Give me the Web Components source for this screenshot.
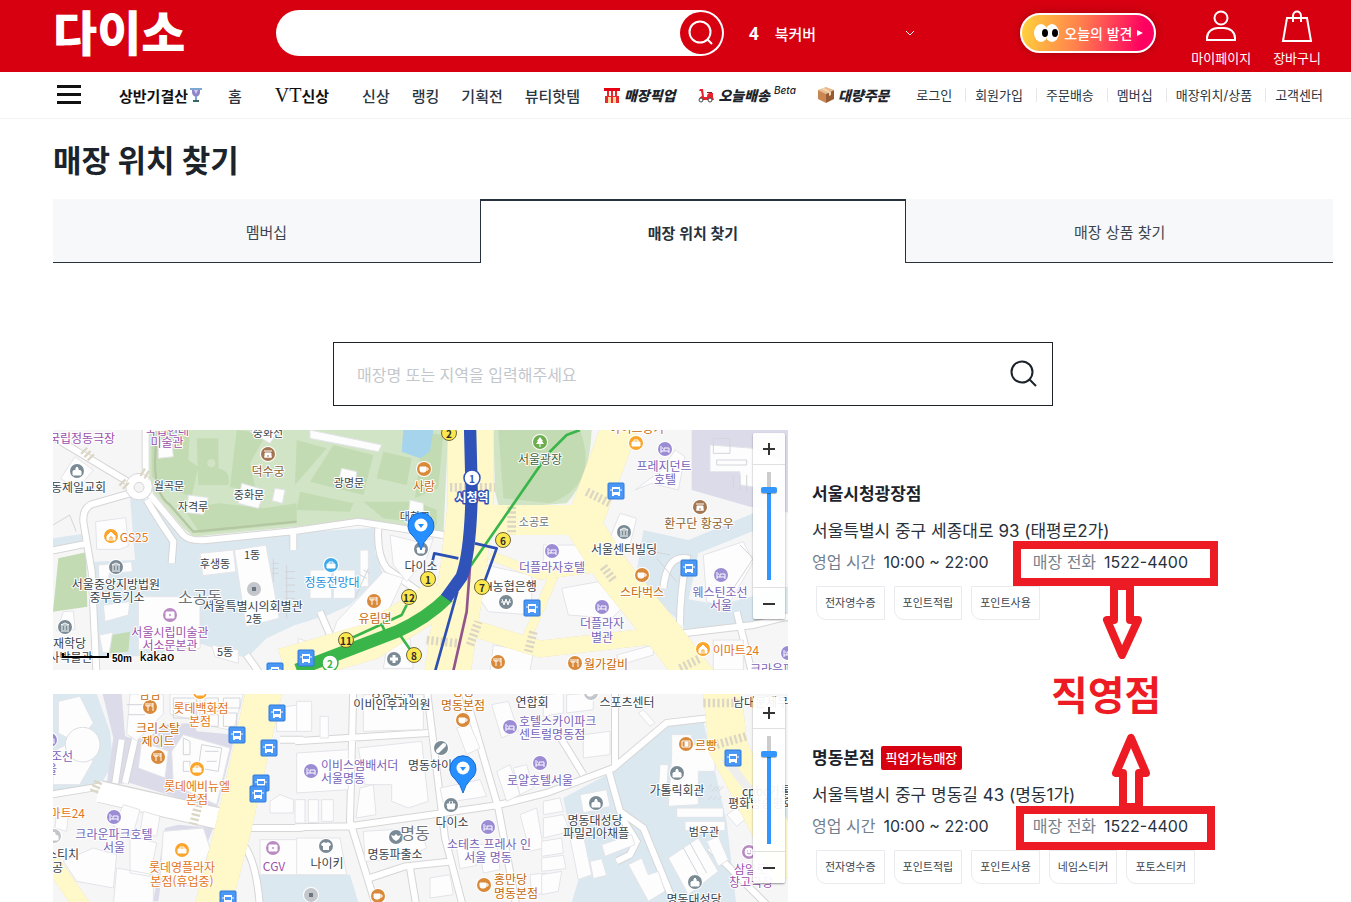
<!DOCTYPE html>
<html lang="ko">
<head>
<meta charset="utf-8">
<meta name="viewport" content="width=device-width, initial-scale=1">
<title>매장 위치 찾기</title>
<style>
    html{
        scrollbar-width: none;
    }
    body{
        margin: 0;
        background: #fff;
        color: #1c232b;
        font-family: Inter, "Noto Sans CJK KR", sans-serif;
        font-size: 15px;
    }
    main{
        padding: 0 18px 40px 53px;
    }
    h1{
        margin: 22px 0 18px;
        font-size: 31px;
        line-height: 40px;
        font-weight: 700;
    }
    store-search{
        margin: 79px auto 24px;
    }
</style>
</head>
<body>
<site-header></site-header>
<site-nav></site-nav>
<main>
    <h1>매장 위치 찾기</h1>
    <page-tabs>
        <a href="#membership">멤버십</a>
        <a href="#store" aria-current="page">매장 위치 찾기</a>
        <a href="#goods">매장 상품 찾기</a>
    </page-tabs>
    <store-search></store-search>
    <store-list>
        <store-card area="cityhall" hours="10:00 ~ 22:00" phone="1522-4400" tags="전자영수증,포인트적립,포인트사용">
            <span slot="name">서울시청광장점</span>
            <span slot="address">서울특별시 중구 세종대로 93 (태평로2가)</span>
        </store-card>
        <store-card class="second" area="myeongdong" hours="10:00 ~ 22:00" phone="1522-4400" badge="픽업가능매장" tags="전자영수증,포인트적립,포인트사용,네임스티커,포토스티커">
            <span slot="name">명동본점</span>
            <span slot="address">서울특별시 중구 명동길 43 (명동1가)</span>
        </store-card>
        <arrow-note slot="note">직영점</arrow-note>
    </store-list>
</main>

<script>
class BaseElement extends HTMLElement {
    constructor() {
        super();
        this.shadow = this.attachShadow({ mode: 'open' });
    }
    connectedCallback() {
        this.shadow.innerHTML = this.render();
    }
}

class SiteHeader extends BaseElement {
    render() {
        return `
<style>
    :host{
        display: flex;
        align-items: center;
        height: 72px;
        padding: 0 30px 0 53px;
        background: #d70011;
        color: #fff;
        box-sizing: border-box;
    }
    a{
        color: inherit;
        text-decoration: none;
    }
    button{
        border: none;
        padding: 0;
        background: none;
        color: inherit;
        font: inherit;
    }
    svg{
        display: block;
        fill: none;
        stroke: currentColor;
    }
    .logo{
        flex: none;
        width: 223px;
        margin-bottom: 4px;
        font-size: 48px;
        line-height: 60px;
        font-weight: 900;
    }
    form{
        display: flex;
        flex: 0 1 448px;
        height: 46px;
        margin-bottom: 6px;
        padding: 2px;
        border-radius: 23px;
        background: #fff;
        box-sizing: border-box;
    }
    input{
        flex: 1;
        min-width: 0;
        border: none;
        outline: none;
        padding: 0 24px;
        background: none;
        font: inherit;
    }
    .find{
        display: grid;
        place-items: center;
        width: 42px;
        height: 42px;
        border-radius: 50%;
        background: #d70011;
    }
    .rank{
        display: flex;
        align-items: center;
        gap: 16px;
        width: 166px;
        margin: 0 0 6px 25px;
        font-weight: 500;
    }
    .rank b{
        font-family: "Open Sans", sans-serif;
        font-size: 17px;
        font-weight: 700;
    }
    .rank button{
        margin-left: auto;
    }
    .right{
        display: flex;
        align-items: center;
        margin-left: auto;
        font-size: 13px;
    }
    .today{
        display: flex;
        align-items: center;
        gap: 5px;
        height: 40px;
        width: 136px;
        margin: 0 35px 6px 0;
        padding-left: 12px;
        border: 2px solid #fff;
        border-radius: 20px;
        box-sizing: border-box;
        background: linear-gradient(100deg, #ffd43b, #ff7c4e 45%, #ff0060 90%);
        box-shadow: 0 0 10px rgba(90,0,0,.4);
        font-size: 14px;
        font-weight: 500;
        white-space: nowrap;
    }
    .today svg{
        stroke: none;
        flex: none;
    }
    .menu{
        display: grid;
        justify-items: center;
        gap: 6px;
        padding-top: 5px;
        line-height: 20px;
    }
    .menu + .menu{
        margin-left: 22px;
    }
</style>
<a class='logo' href='#home'>다이소</a>
<form>
    <input type='search' aria-label='상품 검색'>
    <button class='find' type='button' aria-label='검색'>
        <svg width='26' height='26' viewBox='0 0 26 26' stroke-width='2'><circle cx='12' cy='12' r='10.5'/><path d='M19 19l5 5'/></svg>
    </button>
</form>
<div class='rank'>
    <b>4</b><a href='#rank'>북커버</a>
    <button aria-label='인기 검색어 열기'><svg width='10' height='6' viewBox='0 0 10 6'><path d='M1 1l4 4 4-4'/></svg></button>
</div>
<div class='right'>
    <a class='today' href='#today'>
        <svg width='25' height='20' viewBox='0 0 25 20'>
            <ellipse cx='7' cy='10' rx='7' ry='9' fill='#fff'/><ellipse cx='18' cy='10' rx='7' ry='9' fill='#fff'/>
            <ellipse cx='11' cy='10' rx='3' ry='4' fill='#000'/><ellipse cx='21' cy='10' rx='3' ry='4' fill='#000'/>
        </svg>
        오늘의 발견
        <svg width='6' height='8' viewBox='0 0 6 8'><path d='M0 1l6 3-6 3z' fill='#fff'/></svg>
    </a>
    <a class='menu' href='#my'>
        <svg width='32' height='32' viewBox='0 0 32 32' stroke-width='2'><circle cx='16' cy='8' r='6.5'/><path d='M2 30v-2c0-6 5-10 11-10h6c6 0 11 4 11 10v2z'/></svg>
        마이페이지
    </a>
    <a class='menu' href='#cart'>
        <svg width='32' height='32' viewBox='0 0 32 32' stroke-width='2'><path d='M6 8h20l4 23H2z'/><path d='M12 12V6c0-6 8-6 8 0v6'/></svg>
        장바구니
    </a>
</div>`;
    }
}

class SiteNav extends BaseElement {
    render() {
        const links = ['로그인', '회원가입', '주문배송', '멤버십', '매장위치/상품', '고객센터'];
        return `
<style>
    :host{
        display: flex;
        align-items: center;
        height: 47px;
        padding: 0 28px 0 57px;
        border-bottom: 1px solid #f2f3f5;
        box-sizing: border-box;
        white-space: nowrap;
    }
    button{
        display: grid;
        gap: 5px;
        width: 24px;
        margin: 0 38px 2px 0;
        padding: 0;
        border: none;
        background: none;
    }
    button i{
        height: 3px;
        background: #111;
    }
    a{
        color: #2b3540;
        text-decoration: none;
    }
    nav{
        display: flex;
        align-items: center;
        gap: 22px;
        font-weight: 500;
    }
    nav a{
        display: flex;
        align-items: center;
        gap: 4px;
    }
    .pick{
        color: #1c232b;
        font-size: 14px;
        font-weight: 900;
    }
    .pickup{
        margin-left: 2px;
    }
    .tilt{
        font-style: italic;
    }
    .event{
        gap: 2px;
        margin-right: 4px;
        font-weight: 700;
        color: #111;
    }
    .brand{
        gap: 0;
        margin: 0 11px;
        color: #111;
    }
    .brand span{
        font: 20px/20px "Liberation Serif", serif;
    }
    .brand b{
        font-weight: 700;
    }
    sup{
        align-self: flex-start;
        font: italic 500 10px/10px Inter, sans-serif;
    }
    ul{
        display: flex;
        margin: 0 0 0 auto;
        padding: 0;
        list-style: none;
        font-size: 13px;
    }
    li{
        line-height: 14px;
    }
    li + li{
        margin-left: 13px;
        padding-left: 9px;
        border-left: 1px solid #e5e7ea;
    }
</style>
<button aria-label='전체 메뉴'><i></i><i></i><i></i></button>
<nav>
    <a class='event' href='#event'>상반기결산
        <svg width='12' height='16' viewBox='0 0 12 16'><path d='M2 1h8v4q0 4-4 5-4-1-4-5z' fill='#8f86c9'/><path d='M0 2h12M6 9v4' stroke='#7ba7d4' stroke-width='2'/><path d='M4 3l2 4 2-4z' fill='#d7c8f0'/><path d='M3 13h6v2H3z' fill='#376a5d'/></svg>
    </a>
    <a href='#home'>홈</a>
    <a class='brand' href='#vt'><span>VT</span><b>신상</b></a>
    <a href='#new'>신상</a>
    <a href='#ranking'>랭킹</a>
    <a href='#plan'>기획전</a>
    <a href='#beauty'>뷰티핫템</a>
    <a class='pick pickup tilt' href='#pickup'>
        <svg width='16' height='15' viewBox='0 0 16 15'><path d='M0 0h16v3H0z' fill='#e60012'/><path d='M1 3h14v12H1z' fill='#e8282a'/><path d='M1 3h2v5H1zM5 3h2v5H5zM9 3h2v5H9zM13 3h2v5h-2z' fill='#fff'/><path d='M4 9h3v6H4zM9 9h3v6H9z' fill='#ffd9a0'/></svg>
        매장픽업
    </a>
    <a class='pick tilt' href='#delivery'>
        <svg width='17' height='15' viewBox='0 0 17 15'><path d='M3 1h3l1 8h3q0-4 3-4h3v4l1 3H2q0-3 3-4L4 3H2z' fill='#e8222c'/><path d='M10 4h5v1h-5z' fill='#8a1a20'/><circle cx='4' cy='12' r='2' fill='#fff' stroke='#444'/><circle cx='13' cy='12' r='2' fill='#fff' stroke='#444'/></svg>
        오늘배송<sup>Beta</sup>
    </a>
    <a class='pick tilt' href='#bulk'>
        <svg width='16' height='16' viewBox='0 0 16 16'><path d='M8 0l8 3-8 4-8-4z' fill='#e8b98b'/><path d='M0 3l8 4v9l-8-4z' fill='#c98552'/><path d='M16 3l-8 4v9l8-4z' fill='#995b31'/><path d='M3 2l8 4v3l2-1V5L6 1z' fill='#f3d7b4'/></svg>
        대량주문
    </a>
</nav>
<ul>${links.map(t => `<li><a href='#link'>${t}</a></li>`).join('')}</ul>`;
    }
}

class PageTabs extends BaseElement {
    render() {
        return `
<style>
    :host{
        display: grid;
        grid-template-columns: repeat(3, 1fr);
        height: 64px;
    }
    ::slotted(a){
        display: grid;
        place-items: center;
        padding-top: 2px;
        border-bottom: 1px solid #28323c;
        background: #f7f8fa;
        color: #3c4650;
        font-size: 15px;
        text-decoration: none;
    }
    ::slotted(a[aria-current]){
        padding: 0;
        border: 1px solid #28323c;
        border-width: 2px 1px 0;
        background: #fff;
        color: #28323c;
        font-weight: 600;
    }
</style>
<slot></slot>`;
    }
}

class StoreSearch extends BaseElement {
    render() {
        return `
<style>
    :host{
        display: block;
        max-width: 720px;
    }
    form{
        display: flex;
        height: 64px;
        padding: 0 14px 0 23px;
        border: 1px solid #1c232b;
        box-sizing: border-box;
    }
    input{
        flex: 1;
        min-width: 0;
        padding: 2px 0 0;
        border: none;
        outline: none;
        font: inherit;
        font-size: 16px;
    }
    input::placeholder{
        color: #c3c7cc;
    }
    button{
        padding: 0;
        border: none;
        background: none;
        color: #1c232b;
    }
    svg{
        display: block;
        fill: none;
        stroke: currentColor;
        stroke-width: 2;
    }
</style>
<form>
    <input type='text' aria-label='매장 검색' placeholder='매장명 또는 지역을 입력해주세요'>
    <button type='button' aria-label='검색'><svg width='28' height='28' viewBox='0 0 28 28'><circle cx='12' cy='12' r='10.5'/><path d='M19 19l7 7'/></svg></button>
</form>`;
    }
}

class StoreList extends BaseElement {
    render() {
        return `
<style>
    :host{
        display: grid;
        gap: 24px;
        position: relative;
    }
</style>
<slot></slot>
<slot name='note'></slot>`;
    }
}

class StoreCard extends BaseElement {
    render() {
        const attr = name => this.getAttribute(name);
        return `
<style>
    :host{
        display: grid;
        grid-template-columns: minmax(0, 735px) minmax(420px, 1fr);
        gap: 24px;
        --mark: -9px -30px -12px -20px;
    }
    :host(.second){
        --mark: -8px -27px -12px -17px;
    }
    .info{
        display: flex;
        flex-direction: column;
        justify-content: center;
        padding-top: 2px;
    }
    h2{
        display: flex;
        align-items: center;
        gap: 6px;
        margin: 0;
        font-size: 17px;
        line-height: 24px;
        font-weight: 700;
    }
    mark{
        padding: 0 5px;
        border-radius: 2px;
        background: #d70011;
        color: #fff;
        font-size: 13px;
        font-weight: 500;
    }
    p{
        margin: 12px 0 6px;
        font-size: 17px;
        line-height: 26px;
        color: #28323c;
    }
    dl{
        display: flex;
        gap: 44px;
        margin: 0;
        font-size: 16px;
        line-height: 24px;
    }
    dl div{
        display: flex;
        gap: 8px;
        position: relative;
    }
    dt{
        color: #74808c;
    }
    dd{
        margin: 0;
        color: #28323c;
    }
    .phone::after{
        content: '';
        position: absolute;
        inset: var(--mark);
        border: 8px solid #ed1c24;
    }
    ul{
        display: flex;
        gap: 9px;
        margin: 12px 0 0 4px;
        padding: 0;
        list-style: none;
    }
    li{
        padding: 0 8px;
        border: 1px solid #e9ebee;
        border-radius: 0 0 0 10px;
        font-size: 11px;
        line-height: 32px;
        color: #3c4650;
    }
</style>
<store-map area='${attr('area')}'></store-map>
<div class='info'>
    <h2><slot name='name'></slot>${attr('badge') ? `<mark>${attr('badge')}</mark>` : ''}</h2>
    <p><slot name='address'></slot></p>
    <dl>
        <div><dt>영업 시간</dt><dd>${attr('hours')}</dd></div>
        <div class='phone'><dt>매장 전화</dt><dd>${attr('phone')}</dd></div>
    </dl>
    <ul>${attr('tags').split(',').map(t => `<li>${t}</li>`).join('')}</ul>
</div>`;
    }
}

// Two arrows that join the word to the phone boxes above and below it
class ArrowNote extends BaseElement {
    render() {
        return `
<style>
    :host{
        display: flex;
        flex-direction: column;
        position: absolute;
        left: 998px;
        top: 154px;
        width: 112px;
        color: #ed1c24;
        font-size: 40px;
        line-height: 74px;
        font-weight: 700;
    }
    svg{
        display: block;
        fill: #fff;
        stroke: currentColor;
        stroke-width: 8;
        stroke-linejoin: round;
    }
</style>
<svg width='112' height='75' viewBox='0 0 112 75'><path d='M63 2h16v34h8L71 71 56 36h7z'/></svg>
<slot></slot>
<svg width='112' height='75' viewBox='0 0 112 75'><path d='M72 74h16V40h7L80 5 65 40h7z'/></svg>`;
    }
}

const COLORS = {
    k: '#39434c', g: '#707478', p: '#9c51ab', v: '#7663b8', o: '#e2761b', c: '#c46a0a', b: '#8d6232', l: '#1e8fdc', t: '#3f6540'
};
const DOTS = {
    k: '#7b8b95', p: '#b98bc2', v: '#9c8cd4', o: '#faa52c', c: '#d8893a', b: '#a37650', l: '#3fa9ea', t: '#6cae4f', x: '#c3c6ca'
};
const GLYPHS = {
    bed: '<path d="M-4 -3v7M-4 2h8v2M4 2v-3h-5v3M-3 -1h1"/>',
    cup: '<path d="M-4 -2h6v3q0 2-2 2h-2q-2 0-2-2z" fill="#fff"/><path d="M2 -1h2v2h-2"/>',
    fork: '<path d="M-2 -4v8M-4 -4v3h4v-3M3 -4v8M2 -4v4"/>',
    bag: '<path d="M-4 -1h8v4h-8z" fill="#fff"/><path d="M-2 -1v-2h4v2"/>',
    shop: '<path d="M-4 0l4-4 4 4v4h-8z" fill="#fff"/><path d="M-1 4v-3h2v3" stroke="#faa52c"/>',
    church: '<path d="M-4 4v-4l3-1v-2l1-1 1 1v2l3 1v4z" fill="#fff"/>',
    museum: '<path d="M-4 -2l4-2 4 2zM-4 4h8M-3 -1v4M0 -1v4M3 -1v4"/>',
    basket: '<path d="M-4 -1h8l-1 5h-6z" fill="#fff"/><path d="M-2 -1l1-3M2 -1l-1-3"/>',
    cross: '<path d="M0 -4v8M-4 0h8" stroke-width="3"/>',
    won: '<path d="M-4 -3l2 6 2-6 2 6 2-6M-5 0h10"/>',
    tree: '<path d="M0 -5l3 4h-1l2 3h-8l2-3h-1z" fill="#fff" stroke="none"/><path d="M0 1v4"/>',
    palace: '<path d="M-3 -1h6v4h-6z" fill="#fff"/><path d="M-4 -3h8M-4 3h8"/><path d="M0 1v2" stroke="#a37650"/>',
    ticket: '<path d="M-4 -3h8v6h-8z" fill="#fff"/><circle r="1.5" fill="#b98bc2"/>',
    bread: '<path d="M-4 -3h8v6h-8z"/><path d="M-1 -2h3v4h-3z" fill="#fff"/>',
    tee: '<path d="M-2 -4l-3 2 1 2 1 0v4h6v-4h1l1-2-3-2-2 1z" fill="#fff" stroke="none"/>',
    police: '<path d="M-5 -2l3 1 2-2 2 2 3-1-2 4-3 2-3-2z" fill="#fff" stroke="none"/>',
    pill: '<path d="M-3 3l6-6" stroke-width="4" stroke-linecap="round"/>',
    square: '<path d="M-2 -2h4v4h-4z" fill="#6d777f" stroke="none"/>',
    face: '<circle r="4" fill="#fff"/><path d="M-2 1q2 2 4 0M-2 -1h1M1 -1h1" stroke="#b98bc2"/>'
};

// Ground shapes are drawn on a grid three times as fine as the screen
const MAPS = {
    cityhall: {
        top: 15,
        ground: `
            <g class='blue'>
                <path d='M240 215L300 225 420 355 735 322 985 308 975 380 1000 450 900 540 835 570 735 600 650 640 590 700 400 640 330 690 130 700 125 410 255 405z'/>
                <path d='M9 340L108 325 108 362 9 378zM1780 315L1915 345 2110 265 2130 310 1945 385 1900 600 1790 500 1760 440zM1900 520L2010 540 2230 480 2230 590 1900 612z'/>
            </g>
            <path class='lav' d='M1925 15h305v250l-130-20-175-50z'/>
            <path class='lawn' d='M300 15H1195L1180 330 925 285 735 305 430 335 400 310 300 190z'/>
            <g class='grass'>
                <path d='M305 15h115l-5 90 30 20-20 90q-60-20-120-60zM440 40h65v90q40 10 30 50h-90zM560 15l90 10-50 90 20 90-80-20zM640 250L740 235V295L450 325 400 250 510 235z'/>
                <path d='M740 45L830 70 735 180zM850 60L970 90 940 210 780 170zM1000 80L1085 100 1070 180 980 160zM750 200L910 235 900 260 740 255zM940 230L1100 230 1160 255 1160 300 1000 280zM1120 20l60 10-15 160-70 30z'/>
                <path d='M25 400L108 382 112 545 9 560zM185 630L240 620 235 680 178 684z'/>
            </g>
            <path d='M320 40Q300 200 360 240L430 320 740 290' fill='none' stroke='#b4c7a3' stroke-width='7'/>
            <path d='M1060 15h90l-10 65-30 20-55-20z' fill='#a5d4ec'/>
            <circle cx='484' cy='115' r='22' class='grass'/><circle cx='484' cy='115' r='12' class='lawn'/>
            <g class='edge'><path id='r1' d='M0 30L250 180M287 0V160M300 210L400 330Q420 350 470 345L735 318 925 290 1180 330M240 205L125 238Q98 250 100 290L125 440 140 760M0 378L115 355M290 225L330 290 370 350 365 415M985 310Q980 390 1010 430L1140 525M810 560L870 700M1900 625L2110 600 2230 570M1840 490Q1850 390 1910 400 1890 500 1890 600M2060 560L2110 760M590 690L640 760M730 320V375'/></g>
            <g class='road'><use href='#r1'/></g>
            <circle cx='267' cy='185' r='40' fill='#fff' stroke='#d6d6d6' stroke-width='3'/><circle cx='267' cy='187' r='15' fill='#f4f4f5' stroke='#d6d6d6' stroke-width='3'/>
            <g class='house'>
                <path d='M75 95l55 40-50 60-48-35zM137 290l90-12 8 85-25 10-70 0zM325 55l40-10 5 50-45 5zM600 20l60-20 30 10-30 45zM415 210l60 8-15 50-50-5zM575 175l70 20-20 55-60-15zM675 190l30 5-8 40-30-8z'/>
                <path d='M450 385l100-10 8 65-100 12zM553 375l95-15 40 220-100 25zM145 420l100-10 2 30-70 5v30h-30zM160 540l80-10 -5 40-70 20zM265 515h185v155l-185 5zM148 630l40-8-10 60h-20zM40 560l30-2 5 55-55 5zM485 660l80 15v40l-70-20z'/>
                <path d='M780 15L995 60 985 80 780 40zM875 130l45 10-5 40-50-10zM1080 225l40 10v45l-45-5zM1020 330l80 20 50-10-20 60-60 70-40-50zM780 435h65v85h-65zM850 435h65v85h-65zM930 375h25v110h-25zM860 590L1000 440l60 20-50 110-170 80zM745 640l80 30 10 70h-90zM1010 670l70-30 10 90h-90zM1305 420l140 30 0 120-130-10-60-90zM1330 660l120 20-10 60h-120z'/>
                <path d='M1755 195l80-60 40-60 30 20-20 100-80-20zM1710 265l50 15-25 100-60-30zM1480 360l110 0 60 60-170 10zM1535 490l110-20 70 80-30 30-130-10zM1700 690l110-30 0 30-100 30zM1990 645h90v90h-90zM1980 60l130 10 90 40v90l-130-20v-40h-90zM1960 390l120-40 30 60-80 140-60-20z'/>
            </g>
            <g class='detail'><path d='M1990 40h50v45h-50zM2000 120h90v-15h-90zM2050 150v40M2070 150v45M2090 150v50M670 400v70M665 415h20M665 430h20M665 445h20M710 420v160M705 440h30M705 460h30M705 480h30M705 500h30M705 520h30M705 540h30M955 430l-40 90M960 445l-20-10M950 460l-20-10M1810 380l50 10M1820 400l60 70M2070 360l40 40-60 90M9 300l50-30 20 50'/></g>
            <path class='lawn' d='M1330 15H1625Q1620 160 1550 235L1480 240H1345L1335 200z'/><path class='grass' d='M1345 15H1590Q1650 180 1500 235L1360 220z'/>
            <g class='yedge'><path id='y1' d='M1262 0L1262 240 1240 430 1190 760' stroke-width='138'/><path id='y2' d='M700 725L960 650 1180 510' stroke-width='110'/><path id='y3' d='M1300 285H1600' stroke-width='90'/><path id='y4' d='M1712 0L1630 220 1600 300 1690 440 1850 640 1950 770' stroke-width='108'/><path id='y5' d='M1840 630L1470 672 1270 610' stroke-width='50'/><path id='y6' d='M1320 390L1470 450 1660 425M1510 455L1430 640' stroke-width='28'/></g>
            <g class='yellow'><use href='#y1'/><use href='#y2'/><use href='#y3'/><use href='#y4'/><use href='#y5'/><use href='#y6'/></g>
            <g class='walk'><path d='M1200 187h45M1290 187h45M1130 645L1225 655M1385 245v85M1610 200L1680 235M1260 660L1285 590M1660 425l30 40M1890 730l60-30M100 75l25 25M215 170l20 20M275 140l25 15M1450 620l-15 60'/></g>
            <g fill='none' stroke-linejoin='round'>
                <path d='M1260 425L1250 560 1205 760' stroke='#93568c' stroke-width='8'/>
                <path d='M1590 15L1550 30 1500 80 1475 115 1260 425M1070 540L1055 570 995 598 1005 620M995 598L910 637M1050 630L1085 680' stroke='#39b54a' stroke-width='8'/>
                <path d='M1222 500L1155 740M1275 355L1340 370 1300 480M1225 400L1153 385 1145 420' stroke='#2c4fb3' stroke-width='8'/>
                <path d='M1195 515Q1130 580 1040 620L740 735' stroke='#39b54a' stroke-width='38'/>
                <path d='M1260 0L1265 200Q1262 380 1235 455L1188 520' stroke='#2f53b8' stroke-width='37'/>
            </g>`,
        dots: [[24,41,'k','church'],[215,24,'b','palace'],[58,106,'o','shop'],[63,137,'k','museum'],[201,159,'x','square'],[117,185,'p','ticket'],[12,197,'k','museum'],[371,39,'c','cup'],[487,12,'t','tree'],[278,135,'l','bag'],[321,171,'c','fork'],[368,119,'k','basket'],[453,172,'k','won'],[341,229,'k','cross'],[445,232,'c','fork'],[612,19,'v','bed'],[583,13,'o','bag'],[647,77,'b','palace'],[571,102,'k','museum'],[499,121,'v','bed'],[589,145,'c','cup'],[668,145,'v','bed'],[549,177,'v','bed'],[650,219,'o','shop'],[522,233,'c','fork'],[735,223,'v','bed']],
        bus: [[479,178],[253,228],[563,61],[636,138],[222,241]],
        exits: [[396,3,2],[450,110,6],[375,149,1],[429,157,7],[356,167,12],[293,210,11],[361,225,8]],
        lines: [[419,48,1,'#2f53b8'],[277,233,2,'#39b54a']],
        labels: [[29,7,'국립정동극장','p'],[114,-1,'국립현대','p'],[114,11,'미술관','p'],[215,2,'중화전','k',11],[215,40,'덕수궁','b'],[20,56,'정동제일교회','k'],[116,55,'월곡문','k',11],[196,64,'중화문','k',11],[140,76,'자격루','k',11],[81,106,'GS25','o'],[162,133,'후생동','k',11],[199,124,'1동','k',11],[147,166,'소공동','g',16],[63,153,'서울중앙지방법원','k'],[64,166,'중부등기소','k'],[200,175,'서울특별시의회별관','k'],[201,188,'2동','k',11],[117,201,'서울시립미술관','p'],[117,214,'서소문본관','p'],[11,212,'배재학당','k'],[12,226,'역사박물관','k'],[172,221,'5동','k',11],[296,52,'광명문','k',11],[371,55,'사랑','c'],[362,86,'대한문','k',11],[368,135,'다이소','k'],[279,151,'정동전망대','l'],[322,187,'유림면','c'],[481,91,'소공로','g',11],[487,28,'서울광장','t'],[499,136,'더플라자호텔','v'],[453,155,'NH농협은행','k'],[584,-3,'아이드증가','c'],[611,35,'프레지던트','v'],[612,48,'호텔','v'],[646,92,'환구단 황궁우','b'],[571,118,'서울센터빌딩','k'],[589,161,'스타벅스','c'],[667,161,'웨스틴조선','v'],[668,174,'서울','v'],[549,192,'더플라자','v'],[549,206,'별관','v'],[683,219,'이마트24','o'],[553,233,'월가갈비','c'],[697,238,'크라운파크호텔','v',12,'start']],
        extra: `<text x='419' y='66' class='station'>시청역</text>
            <path d='M10 223v4h45v-4' fill='none' stroke='#000' stroke-width='2'/>
            <text x='69' y='228' class='scale'>50m</text><text x='104' y='226' class='maker'>kakao</text>`,
        pin: [368, 120]
    },
    myeongdong: {
        top: 18,
        ground: `
            <g class='blue'><path d='M9 18H140L180 130 190 230 150 290 9 310zM735 560H900L930 660H720zM625 560H740V660H640zM1540 330L1690 250 1860 110 1960 100 2030 400 2060 660H1560L1590 560 1560 430zM2170 360h60v120z'/></g>
            <path class='lav' d='M158 18H215L225 145 260 155 330 130 340 110 430 105 440 130 555 140 500 365 240 285 170 290 190 150zM345 420L385 410 490 420 470 470 350 470 325 640H310z'/>
            <g class='edge'><path id='r2' d='M0 320L165 293M215 155L195 290M260 130L225 285M600 420H760M690 155H760M580 470Q620 520 630 660M910 0L900 400 980 660M735 160L1135 135M735 418L900 415 1180 375 1340 352 1490 315 1690 240 1850 105 1980 90M1130 0L1185 450 1240 660M1240 0L1345 360 1400 660M945 575L1065 535 1210 520M1080 540L1100 660M1695 0V240M1520 130L1600 260M1675 245L1710 370 1780 420 1870 640M1710 380L1760 460 1740 500 1700 520M2050 200L2150 400M1980 480L2160 660'/></g>
            <g class='road'><use href='#r2'/></g>
            <path d='M150 310L520 395' stroke='#d6d6d6' stroke-width='68'/><path d='M145 310L525 396' stroke='#fff' stroke-width='62'/>
            <g class='house'>
                <path d='M25 40L90 25l40 80-50 60-55-30zM9 190l60-30 60 60-40 70H9zM240 18h100v60l-80 80-30-20zM360 18h80l-5 80-75-20zM450 18h130l-30 110-100-20zM275 160l80 30-10 80-80-30zM400 140l140 40-40 170-130-60-5-100zM340 430l120-10 20 60-40 120-110-30zM220 350l50 15-20 70-60-20zM280 370l50 15-10 60-50-10zM240 440l80 25-20 100-60-10zM130 480l70 20-10 100-110-20-40-60zM20 370l35 10-5 50-35-10zM200 540l110 20 0 90H190zM680 60l70-10v80h-70zM660 340l30-20 40 15v40h-70zM630 455h120v105H630z'/>
                <path d='M740 40h45v90h-45zM810 85h25v65h-25zM940 20h180v105l-180 5zM925 180l190-20 20 180-60 20-50-20 0-50-80 0zM740 195l155-10v120l-155 10zM735 335h30v70h-30zM775 335h30v68h-30zM815 335h35v65h-35zM930 300l40-10 8 90-60 10zM940 430l170-10 20 60-60 30-125 10zM740 450h130l20 110H740zM1140 570l60-10 10 60-70 10zM1170 300l120-25 20 50-130 20z'/>
                <path d='M1220 120l40-10 30 70-40 20zM1325 50l50-10 30 90-50 20zM1340 250l40-20 30 90-40 20zM1390 240l40-10 20 70-40 20zM1220 480l50-8 10 60-50 10zM1285 470l55-5 10 80-50 10zM1410 380l50-20 20 120-40 10zM1440 560l50-5 5 60-50 5zM1480 20l60-5 0 60-60 10zM1550 20l80-5 0 50-80 10zM1600 140l80-10v70l-80 10zM1765 75l15-10 35 40-15 10z'/>
                <path d='M1480 340l50-10 10 40-60 10zM1480 390l60-10 20 50-80 20zM1475 460l60-10 5 45-65 10zM1475 510l65-8 8 40-73 8zM1475 560l60-10-10 60-50 10zM1590 320l80-15 10 50-80 20zM1560 450l40-10 25 120-40 15zM1620 520l35-8 15 50-40 10zM1655 470l90-30 10 30-90 35zM1735 530l40-20 20 50 30-10 20 60-50 30zM1865 140h60v30h70v80h-50v100l-90 5 10-150zM1830 230h25l-5 80h-25zM1880 360h140v28H1880zM1905 400h120v28H1905zM1855 510l90-60 60 100-90 70zM1970 460l35-15 30 70-30 20zM2030 380l30-20 30 30-30 25z'/>
            </g>
            <g class='detail'><path d='M370 30h70v60h-70zM385 45h40M465 30h40v40h-40zM520 30h50v30h-50zM520 75h40v40h-40zM455 80h50v35h-50zM455 170l60 10-10 70-60-10zM465 190h40M470 220h30M400 150l20 10v40h-20zM400 220h20v30h-20zM230 50h60M235 80h50M1975 300l10-10M1985 310l15-15M1995 310l15-15M2005 310l15-15M1975 335l10-10M1990 335l10-10M2005 335l10-10M1900 480l50 90M1920 465l50 90'/></g>
            <circle cx='98' cy='170' r='52' fill='#fdfdfe' stroke='#dcdee2' stroke-width='3'/>
            <g class='yedge'><path id='y7' d='M644 0L600 200 550 420 485 670' stroke-width='108'/><path id='y8' d='M0 515L100 660' stroke-width='50'/><path id='y9' d='M2015 0L2035 180 2140 380 2230 560' stroke-width='115'/></g>
            <g class='yellow'><use href='#y7'/><use href='#y8'/><use href='#y9'/></g>
            <g class='walk'><path d='M445 350l-15 60M145 280l-15 35M1960 45h110M2000 170l90-25'/></g>
            <path d='M2025 210L2170 400' stroke='#eeeeef' stroke-width='26'/>`,
        dots: [[97,13,'c','fork'],[105,63,'c','fork'],[147,-2,'o','bag'],[144,75,'o','bag'],[61,123,'v','bed'],[129,156,'o','bag'],[220,154,'p','ticket'],[1,142,'x','church'],[-3,46,'v','bed'],[410,26,'c','cup'],[388,54,'k','pill'],[258,77,'v','bed'],[457,33,'v','bed'],[487,69,'v','bed'],[398,111,'k','basket'],[435,133,'v','bed'],[343,143,'k','police'],[273,152,'k','tee'],[431,191,'c','cup'],[325,202,'c','cup'],[258,201,'x','square'],[538,-1,'x','cup'],[633,50,'c','bread'],[624,79,'k','church'],[543,109,'k','church'],[642,188,'k','church'],[696,158,'p','face']],
        bus: [[224,19],[184,41],[216,54],[208,89],[205,100],[175,205],[680,64]],
        exits: [],
        lines: [],
        labels: [[97,-1,'담담','c'],[148,13,'롯데백화점','o'],[147,26,'본점','o'],[105,33,'크리스탈','c'],[105,46,'제이드','c'],[20,61,'웨스틴조선','v',12,'end'],[4,74,'서울','v',12,'end'],[144,91,'롯데에비뉴엘','o'],[144,104,'본점','o'],[32,118,'이마트24','o',12,'end'],[61,139,'크라운파크호텔','v'],[61,152,'서울','v'],[26,159,'스티치','k',12,'end'],[10,172,'공','k',12,'end'],[129,172,'롯데영플라자','o'],[129,186,'본점(휴업중)','o'],[221,171,'CGV','p'],[339,-3,'명동연세','k'],[339,9,'이비인후과의원','k'],[410,-4,'빙빙','c'],[410,10,'명동본점','c'],[479,7,'연합회','k'],[355,70,'명동하이오','k',12,'start'],[268,70,'이비스앰배서더','v',12,'start'],[268,83,'서울명동','v',12,'start'],[487,85,'로얄호텔서울','v'],[466,26,'호텔스카이파크','v',12,'start'],[466,39,'센트럴명동점','v',12,'start'],[399,127,'다이소','k'],[362,138,'명동','g',16],[342,159,'명동파출소','k'],[274,168,'나이키','k'],[436,149,'소테츠 프레사 인','v'],[435,162,'서울 명동','v'],[441,184,'홍만당','c',12,'start'],[441,198,'명동본점','c',12,'start'],[574,7,'스포츠센터','k'],[653,50,'르빵','c'],[624,95,'가톨릭회관','k'],[542,125,'명동대성당','k'],[543,138,'파밀리아채플','k'],[651,137,'범우관','k',11],[689,96,'cpbc가톨릭','k',12,'start'],[675,108,'평화방송평화','k',12,'start'],[680,7,'남대문세무서','k',12,'start'],[681,174,'삼일로','p',12,'start'],[676,187,'창고극장','p',12,'start'],[641,204,'명동대성당','k']],
        extra: '',
        pin: [410, 99]
    }
};

class StoreMap extends BaseElement {
    render() {
        const map = MAPS[this.getAttribute('area')];
        const dots = map.dots.map(([x, y, c, g]) => `<g transform='translate(${x} ${y})'><circle r='8' fill='#fff'/><circle r='7' fill='${DOTS[c]}'/><g fill='none' stroke='#fff'>${GLYPHS[g]}</g></g>`);
        const bus = map.bus.map(([x, y]) => `<g transform='translate(${x} ${y})'><rect x='-8' y='-8' width='16' height='16' rx='1' fill='#4a97f5' stroke='#2f7ad8'/><path d='M-4 -4h8v8h-8z' fill='#fff'/><path d='M-3 -2h6v3h-6z' fill='#4a97f5'/><path d='M-3 4v1M3 4v1' stroke='#fff' stroke-width='2'/><path d='M-5 -2v2M5 -2v2' stroke='#fff'/></g>`);
        const exits = map.exits.map(([x, y, n]) => `<circle cx='${x}' cy='${y}' r='7.5' fill='#fde74f' stroke='#6b6437'/><text x='${x}' y='${y}' class='exit'>${n}</text>`);
        const lines = map.lines.map(([x, y, n, c]) => `<circle cx='${x}' cy='${y}' r='8' fill='#fff' stroke='${c}' stroke-width='1.5'/><text x='${x}' y='${y}' class='exit' style='fill: ${c}'>${n}</text>`);
        const labels = map.labels.map(([x, y, t, c, size = 12, anchor = 'middle']) => `<text x='${x}' y='${y}' fill='${COLORS[c]}' font-size='${size}' text-anchor='${anchor}'>${t}</text>`);
        return `
<style>
    :host{
        display: block;
        position: relative;
        height: 240px;
        overflow: hidden;
        background: #f6f6f7;
    }
    .map{
        display: block;
        width: 100%;
        height: 100%;
        font-family: "Noto Sans CJK KR", sans-serif;
    }
    .map text{
        dominant-baseline: central;
        paint-order: stroke;
        stroke: #fff;
        stroke-width: 2px;
        stroke-linejoin: round;
    }
    .map .exit{
        stroke: none;
        fill: #2b2b2b;
        font-size: 10px;
        font-weight: 700;
        text-anchor: middle;
    }
    .map .station{
        fill: #fff;
        stroke: #2c4fb3;
        stroke-width: 3px;
        font-size: 12px;
        font-weight: 700;
        text-anchor: middle;
    }
    .map .scale{
        font: 700 10px "Liberation Sans", sans-serif;
        text-anchor: middle;
    }
    .map .maker{
        font: 500 12px "Noto Sans", sans-serif;
        text-anchor: middle;
    }
    .blue{ fill: #dbe8f0; }
    .lav{ fill: #dcdbea; }
    .lawn{ fill: #d2e4c6; }
    .grass{ fill: #c3dbb2; }
    .house{ fill: #fdfdfe; stroke: #e3e4e8; stroke-width: 3; }
    .edge, .road, .detail, .walk, .yedge, .yellow{ fill: none; }
    .edge{ stroke: #d6d6d6; stroke-width: 24; }
    .road{ stroke: #fff; stroke-width: 18; }
    .detail{ stroke: #d3d5d9; stroke-width: 3; }
    .yedge{ stroke: #ddd6bb; }
    .yellow{ stroke: #fff8c9; }
    .walk{ stroke: #dcd6c4; stroke-width: 26; stroke-dasharray: 7 7; }
    .zoom{
        display: grid;
        grid-template-rows: 32px 1fr 32px;
        justify-items: center;
        position: absolute;
        top: 3px;
        right: 3px;
        width: 32px;
        height: 186px;
        border-radius: 2px;
        background: rgba(255,255,255,.93);
        box-shadow: 0 1px 2px rgba(0,0,0,.4);
    }
    button{
        display: grid;
        place-items: center;
        width: 100%;
        padding: 0;
        border: none;
        background: none;
    }
    button:first-child{
        border-bottom: 1px solid #e0e0e0;
    }
    button:last-child{
        border-top: 1px solid #e0e0e0;
    }
    button svg{
        stroke: #333;
        stroke-width: 2;
    }
    input{
        appearance: none;
        writing-mode: vertical-lr;
        direction: rtl;
        align-self: center;
        width: 16px;
        height: 108px;
        margin: 0;
        background: linear-gradient(#ccc 18px, #3396ff 18px) center / 4px 100% no-repeat;
    }
    input::-webkit-slider-thumb{
        appearance: none;
        width: 16px;
        height: 6px;
        border-radius: 2px;
        background: #3396ff;
        box-shadow: 0 1px 1px rgba(0,0,0,.3);
    }
</style>
<svg class='map' aria-label='지도'>
    <g transform='scale(.33333) translate(-9 -${map.top})'>${map.ground}</g>
    ${dots.join('')}
    ${labels.join('')}
    ${exits.join('')}
    ${bus.join('')}
    ${lines.join('')}
    ${map.extra}
    <g transform='translate(${map.pin.join(' ')})'>
        <path d='M0 0Q-2 -8 -8 -14A13 13 0 1 1 8 -14Q2 -8 0 0z' fill='#258fff' stroke='#1768cf'/>
        <circle cy='-25' r='6.5' fill='#fff'/><path d='M-3 -26h6l-3 4z' fill='#258fff'/>
    </g>
</svg>
<div class='zoom'>
    <button aria-label='확대'><svg width='12' height='12'><path d='M6 0v12M0 6h12'/></svg></button>
    <input type='range' min='0' max='100' value='85' aria-label='지도 배율'>
    <button aria-label='축소'><svg width='12' height='12'><path d='M0 6h12'/></svg></button>
</div>`;
    }
}

window.customElements.define('site-header', SiteHeader);
window.customElements.define('site-nav', SiteNav);
window.customElements.define('page-tabs', PageTabs);
window.customElements.define('store-search', StoreSearch);
window.customElements.define('store-map', StoreMap);
window.customElements.define('store-card', StoreCard);
window.customElements.define('store-list', StoreList);
window.customElements.define('arrow-note', ArrowNote);
</script>
</body>
</html>
